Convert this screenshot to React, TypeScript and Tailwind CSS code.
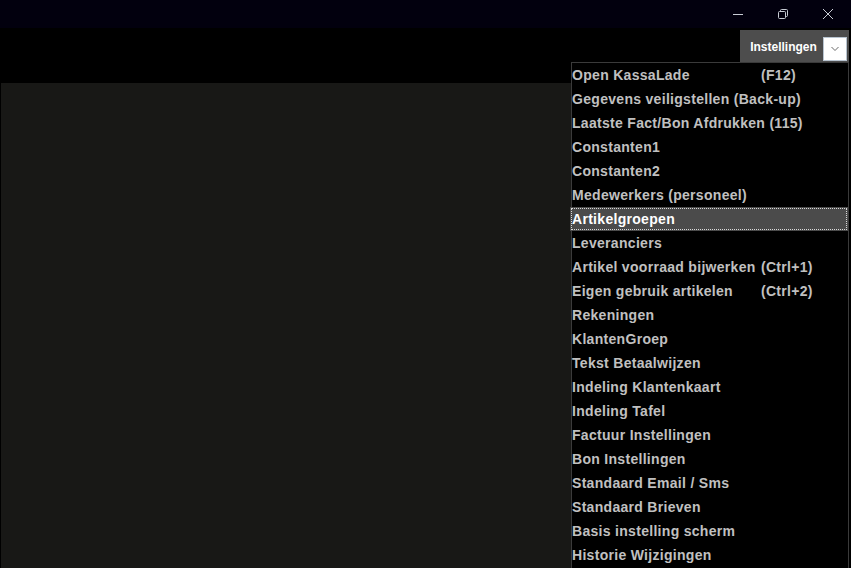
import React from "react";

const items: { label: string; shortcut?: string; active?: boolean }[] = [
  { label: "Open KassaLade", shortcut: "(F12)" },
  { label: "Gegevens veiligstellen (Back-up)" },
  { label: "Laatste Fact/Bon Afdrukken (115)" },
  { label: "Constanten1" },
  { label: "Constanten2" },
  { label: "Medewerkers (personeel)" },
  { label: "Artikelgroepen", active: true },
  { label: "Leveranciers" },
  { label: "Artikel voorraad bijwerken", shortcut: "(Ctrl+1)" },
  { label: "Eigen gebruik artikelen", shortcut: "(Ctrl+2)" },
  { label: "Rekeningen" },
  { label: "KlantenGroep" },
  { label: "Tekst Betaalwijzen" },
  { label: "Indeling Klantenkaart" },
  { label: "Indeling Tafel" },
  { label: "Factuur Instellingen" },
  { label: "Bon Instellingen" },
  { label: "Standaard Email / Sms" },
  { label: "Standaard Brieven" },
  { label: "Basis instelling scherm" },
  { label: "Historie Wijzigingen" },
];

export default function App() {
  return (
    <div
      className="w-[851px] h-[568px] bg-black overflow-hidden flex flex-col"
      style={{ fontFamily: '"Liberation Sans", Arial, sans-serif' }}
    >
      {/* title bar */}
      <div className="h-[28px] bg-[#02000e] flex justify-end items-center shrink-0">
        <div className="w-[45px] h-[28px] flex items-center justify-center">
          <svg width="12" height="12" viewBox="0 0 12 12">
            <path d="M1 6.5h10" stroke="#c8ccd4" strokeWidth="1" />
          </svg>
        </div>
        <div className="w-[45px] h-[28px] flex items-center justify-center">
          <svg width="12" height="12" viewBox="0 0 12 12" fill="none" stroke="#c8ccd4" strokeWidth="1">
            <rect x="1.5" y="3.5" width="7" height="7" rx="1" />
            <path d="M3.5 3.5V2.5a1 1 0 0 1 1-1h5a1 1 0 0 1 1 1v5a1 1 0 0 1-1 1h-1" />
          </svg>
        </div>
        <div className="w-[45px] h-[28px] flex items-center justify-center mr-[1px]">
          <svg width="12" height="12" viewBox="0 0 12 12" stroke="#c8ccd4" strokeWidth="1">
            <path d="M1 1l10 10M11 1L1 11" />
          </svg>
        </div>
      </div>

      <div className="flex flex-1 min-h-0">
        {/* left area */}
        <div className="w-[571px] flex flex-col shrink-0">
          <div className="h-[55px] bg-black shrink-0" />
          <div className="flex-1 bg-[#181816] ml-[1px]" />
        </div>

        {/* right area */}
        <div className="flex-1 flex flex-col">
          <div className="h-[34px] flex justify-end pt-[2px] shrink-0">
            <div className="w-[109px] h-[32px] bg-[#4d4d4d] flex items-end pr-[2px] mr-[2px]">
              <div className="flex-1 h-[32px] flex items-center justify-center text-white font-bold text-[12px] pl-[4px] pt-[2px]">
                Instellingen
              </div>
              <div className="w-[24px] h-[24px] bg-white border border-[#b8c4d0] flex items-center justify-center mb-[1px]">
                <svg width="10" height="6" viewBox="0 0 10 6">
                  <path d="M1.5 1l3.5 3.5L8.5 1" fill="none" stroke="#6a6a6a" strokeWidth="1" />
                </svg>
              </div>
            </div>
          </div>
          <div className="flex-1 bg-black border-l border-t border-r border-[#3a3a3a] mr-[2px]">
            {items.map((it) => (
              <div
                key={it.label}
                className={
                  it.active
                    ? "h-[24px] flex items-center bg-[#4b4b4b] text-white -ml-[2px] pl-[2px] outline-1 outline-dotted outline-[#d8d8d8] -outline-offset-2"
                    : "h-[24px] flex items-center text-[#c0c0c0]"
                }
              >
                <span className="text-[14px] font-bold leading-none w-[189px] whitespace-nowrap tracking-[0.3px]">
                  {it.label}
                </span>
                {it.shortcut && (
                  <span className="text-[14px] font-bold leading-none whitespace-nowrap tracking-[0.3px]">
                    {it.shortcut}
                  </span>
                )}
              </div>
            ))}
          </div>
        </div>
      </div>
    </div>
  );
}
